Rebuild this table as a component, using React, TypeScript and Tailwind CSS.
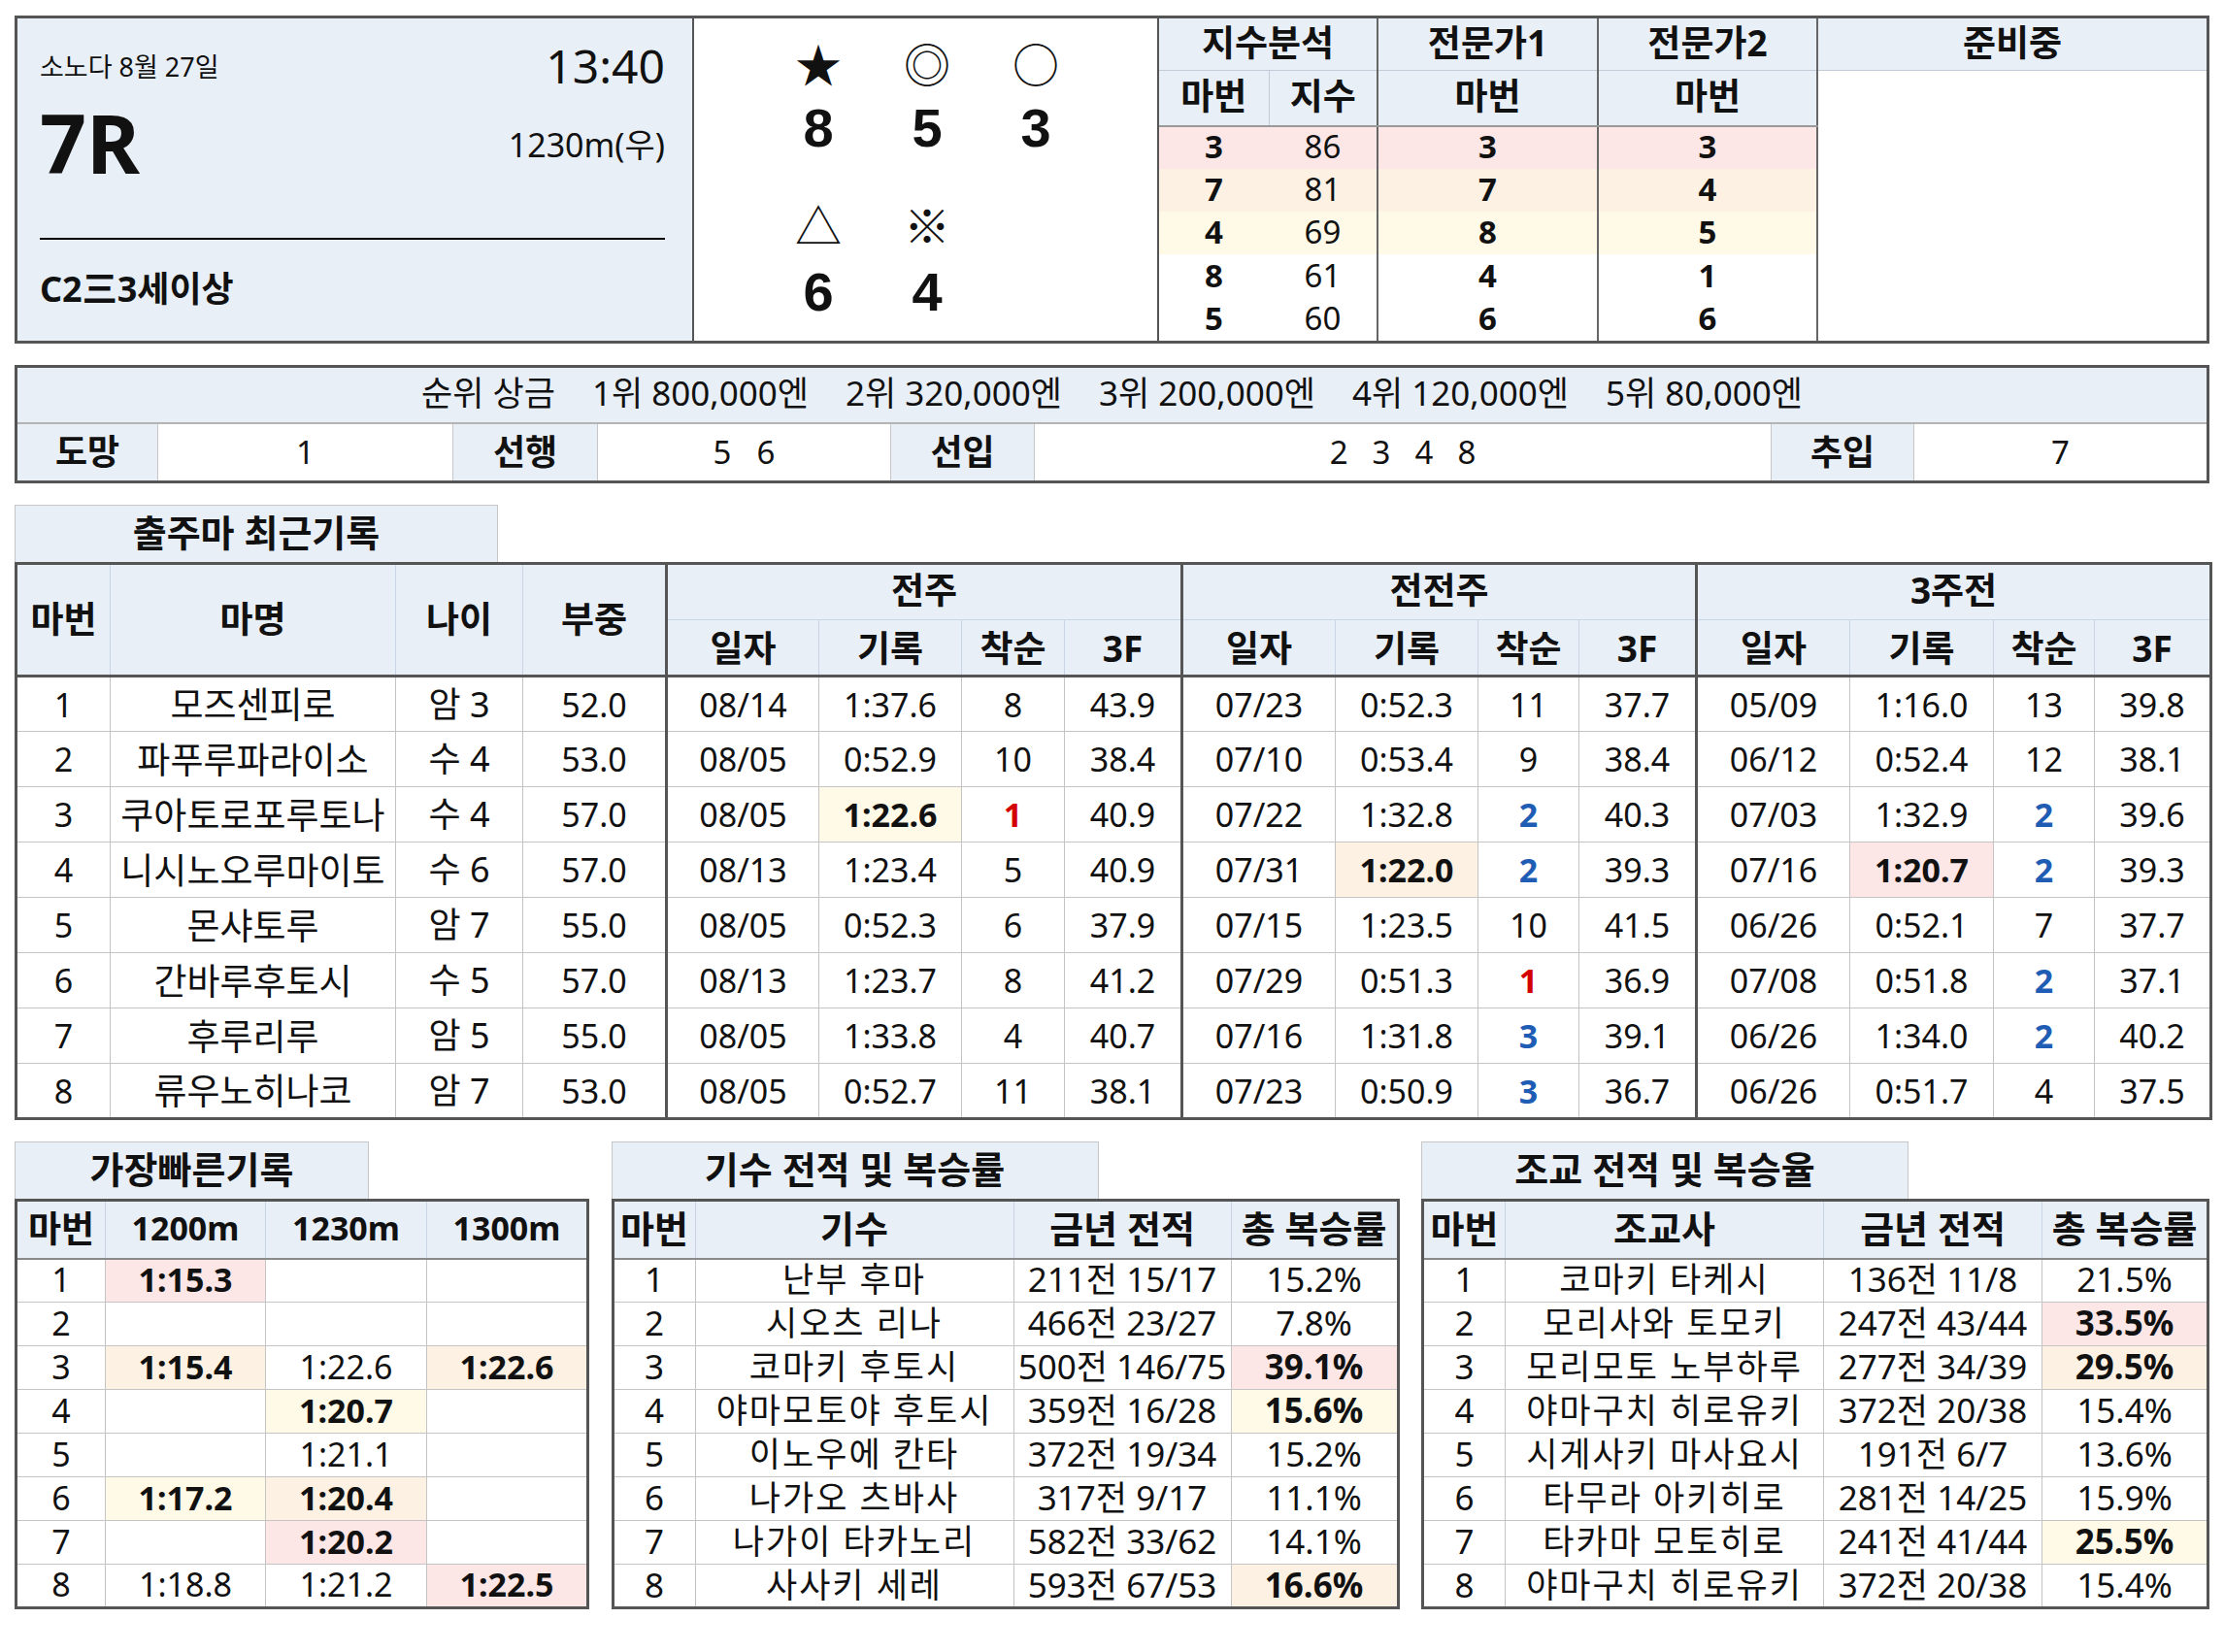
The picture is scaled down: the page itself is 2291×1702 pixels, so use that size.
import React from 'react';

const PINK = 'bg-[#fce6e6]';
const ORANGE = 'bg-[#fdf1e4]';
const YELLOW = 'bg-[#fefae7]';
const HEAD = 'bg-[#e9eff7]';

type Group = [string, string, string, string];
type Horse = { no: string; name: string; age: string; wt: string; g: Group[] };

const horses: Horse[] = [
  { no: '1', name: '모즈센피로', age: '암 3', wt: '52.0', g: [['08/14', '1:37.6', '8', '43.9'], ['07/23', '0:52.3', '11', '37.7'], ['05/09', '1:16.0', '13', '39.8']] },
  { no: '2', name: '파푸루파라이소', age: '수 4', wt: '53.0', g: [['08/05', '0:52.9', '10', '38.4'], ['07/10', '0:53.4', '9', '38.4'], ['06/12', '0:52.4', '12', '38.1']] },
  { no: '3', name: '쿠아토로포루토나', age: '수 4', wt: '57.0', g: [['08/05', '1:22.6', '1', '40.9'], ['07/22', '1:32.8', '2', '40.3'], ['07/03', '1:32.9', '2', '39.6']] },
  { no: '4', name: '니시노오루마이토', age: '수 6', wt: '57.0', g: [['08/13', '1:23.4', '5', '40.9'], ['07/31', '1:22.0', '2', '39.3'], ['07/16', '1:20.7', '2', '39.3']] },
  { no: '5', name: '몬샤토루', age: '암 7', wt: '55.0', g: [['08/05', '0:52.3', '6', '37.9'], ['07/15', '1:23.5', '10', '41.5'], ['06/26', '0:52.1', '7', '37.7']] },
  { no: '6', name: '간바루후토시', age: '수 5', wt: '57.0', g: [['08/13', '1:23.7', '8', '41.2'], ['07/29', '0:51.3', '1', '36.9'], ['07/08', '0:51.8', '2', '37.1']] },
  { no: '7', name: '후루리루', age: '암 5', wt: '55.0', g: [['08/05', '1:33.8', '4', '40.7'], ['07/16', '1:31.8', '3', '39.1'], ['06/26', '1:34.0', '2', '40.2']] },
  { no: '8', name: '류우노히나코', age: '암 7', wt: '53.0', g: [['08/05', '0:52.7', '11', '38.1'], ['07/23', '0:50.9', '3', '36.7'], ['06/26', '0:51.7', '4', '37.5']] },
];

// best record highlights in the recent-races table: row-group
const timeMarks: Record<string, string> = { '2-0': YELLOW, '3-1': ORANGE, '3-2': PINK };

type Mark = { v: string; bg?: string };
const fastest: Mark[][] = [
  [{ v: '1:15.3', bg: PINK }, { v: '' }, { v: '' }],
  [{ v: '' }, { v: '' }, { v: '' }],
  [{ v: '1:15.4', bg: ORANGE }, { v: '1:22.6' }, { v: '1:22.6', bg: ORANGE }],
  [{ v: '' }, { v: '1:20.7', bg: YELLOW }, { v: '' }],
  [{ v: '' }, { v: '1:21.1' }, { v: '' }],
  [{ v: '1:17.2', bg: YELLOW }, { v: '1:20.4', bg: ORANGE }, { v: '' }],
  [{ v: '' }, { v: '1:20.2', bg: PINK }, { v: '' }],
  [{ v: '1:18.8' }, { v: '1:21.2' }, { v: '1:22.5', bg: PINK }],
];

type Person = [string, string, string, string?];
const jockeys: Person[] = [
  ['난부 후마', '211전 15/17', '15.2%'],
  ['시오츠 리나', '466전 23/27', '7.8%'],
  ['코마키 후토시', '500전 146/75', '39.1%', PINK],
  ['야마모토야 후토시', '359전 16/28', '15.6%', YELLOW],
  ['이노우에 칸타', '372전 19/34', '15.2%'],
  ['나가오 츠바사', '317전 9/17', '11.1%'],
  ['나가이 타카노리', '582전 33/62', '14.1%'],
  ['사사키 세레', '593전 67/53', '16.6%', ORANGE],
];
const trainers: Person[] = [
  ['코마키 타케시', '136전 11/8', '21.5%'],
  ['모리사와 토모키', '247전 43/44', '33.5%', PINK],
  ['모리모토 노부하루', '277전 34/39', '29.5%', ORANGE],
  ['야마구치 히로유키', '372전 20/38', '15.4%'],
  ['시게사키 마사요시', '191전 6/7', '13.6%'],
  ['타무라 아키히로', '281전 14/25', '15.9%'],
  ['타카마 모토히로', '241전 41/44', '25.5%', YELLOW],
  ['야마구치 히로유키', '372전 20/38', '15.4%'],
];

const index = [
  ['3', '86', '3', '3', PINK],
  ['7', '81', '7', '4', ORANGE],
  ['4', '69', '8', '5', YELLOW],
  ['8', '61', '4', '1', ''],
  ['5', '60', '6', '6', ''],
];

function rankColor(r: string) {
  if (r === '1') return 'font-bold text-[#d40000]';
  if (r === '2' || r === '3') return 'font-bold text-[#1f5db5]';
  return '';
}

function Tab({ title, w }: { title: string; w: string }) {
  return (
    <div className={`${w} ${HEAD} flex h-[59px] items-center justify-center border border-b-0 border-[#c6c6c6] pb-[4px] text-[38px] font-bold`}>
      {title}
    </div>
  );
}

function PeopleTable({ title, who, rows, cols }: { title: string; who: string; rows: Person[]; cols: number[] }) {
  const th = `${HEAD} border border-[#c9d5e5] h-[60px] p-0 pb-[3px] text-[38px] font-bold leading-none border-b-2 border-b-[#8a8a8a]`;
  const td = 'border border-[#c4c4c4] h-[45px] p-0 pb-[3px] text-center text-[35px] leading-none whitespace-nowrap';
  return (
    <div>
      <Tab title={title} w="w-[502px]" />
      <table className="w-[809px] table-fixed border-collapse border-[3px] border-[#555]">
        <colgroup>
          {cols.map((c, i) => (
            <col key={i} style={{ width: c }} />
          ))}
        </colgroup>
        <thead>
          <tr>
            <th className={th}>마번</th>
            <th className={th}>{who}</th>
            <th className={th}>금년 전적</th>
            <th className={`${th} whitespace-nowrap`}>총 복승률</th>
          </tr>
        </thead>
        <tbody>
          {rows.map((r, i) => (
            <tr key={i}>
              <td className={td}>{i + 1}</td>
              <td className={`${td} text-[33px] tracking-[2px]`}>{r[0]}</td>
              <td className={td}>{r[1]}</td>
              <td className={`${td} ${r[3] ? `${r[3]} font-bold` : ''}`}>{r[2]}</td>
            </tr>
          ))}
        </tbody>
      </table>
    </div>
  );
}

export default function App() {
  const mainTh = `${HEAD} border border-[#c9d5e5] h-[58px] p-0 text-[37px] font-bold leading-none`;
  const mainTd = 'border border-[#c4c4c4] h-[57px] p-0 text-center text-[34px] leading-none whitespace-nowrap';
  const groupEdge = 'border-l-[3px] border-l-[#555]';
  const idxTd = 'h-[44px] p-0 pb-[3px] text-center text-[33px] leading-none';
  const idxTh = 'p-0 pb-[4px] text-[37px] font-bold leading-none';
  const bigNum = 'flex h-[50px] items-center justify-center text-[56px] font-bold leading-none';
  const smallCell = 'h-[45px] border border-[#c4c4c4] p-0 pb-[3px] text-center text-[34px] leading-none';

  return (
    <div
      className="min-h-[1702px] w-[2291px] bg-white px-[15px] pt-[16px] text-[#111]"
      style={{ fontFamily: '"Noto Sans", "Noto Sans CJK KR", sans-serif' }}
    >
      {/* race header */}
      <div className="flex h-[338px] border-[3px] border-[#555]">
        <div className={`${HEAD} flex w-[697px] flex-col border-r-2 border-[#555] pl-[23px] pr-[28px]`}>
          <div className="mt-[19px] flex h-[60px] items-center justify-between">
            <span className="pt-[2px] text-[27px]">소노다 8월 27일</span>
            <span className="text-[48px] leading-none">13:40</span>
          </div>
          <div className="mt-[4px] flex h-[90px] items-center justify-between">
            <span className="text-[84px] font-bold leading-none">7R</span>
            <span className="pt-[4px] text-[34px]">1230m(우)</span>
          </div>
          <div className="mt-[53px] border-t-2 border-black" />
          <div className="mt-[31px] flex h-[40px] items-center text-[36px] font-bold">C2三3세이상</div>
        </div>

        <div className="w-[479px] border-r-2 border-[#555] pl-[72px] pt-[20px]" style={{ fontFamily: '"Noto Sans CJK KR", sans-serif' }}>
          <div className="grid grid-cols-[112px_112px_112px] text-center">
            {['★', '◎', '○'].map((s) => (
              <div key={s} className="flex h-[50px] items-center justify-center text-[48px] leading-none">{s}</div>
            ))}
          </div>
          <div className="mt-[18px] grid grid-cols-[112px_112px_112px] text-center" style={{ fontFamily: '"Liberation Sans", sans-serif' }}>
            {['8', '5', '3'].map((s) => (
              <div key={s} className={bigNum}>{s}</div>
            ))}
          </div>
          <div className="mt-[48px] grid grid-cols-[112px_112px_112px] text-center">
            {['△', '※'].map((s) => (
              <div key={s} className="flex h-[50px] items-center justify-center text-[48px] leading-none">{s}</div>
            ))}
          </div>
          <div className="mt-[21px] grid grid-cols-[112px_112px_112px] text-center" style={{ fontFamily: '"Liberation Sans", sans-serif' }}>
            {['6', '4'].map((s) => (
              <div key={s} className={bigNum}>{s}</div>
            ))}
          </div>
        </div>

        <table className="h-full flex-1 table-fixed border-collapse">
          <colgroup>
            <col style={{ width: 113 }} />
            <col style={{ width: 112 }} />
            <col style={{ width: 227 }} />
            <col style={{ width: 226 }} />
            <col />
          </colgroup>
          <tbody>
            <tr>
              <th colSpan={2} className={`${HEAD} ${idxTh} h-[53px] border-r-2 border-b border-r-[#666] border-b-[#c2ccd8]`}>지수분석</th>
              <th className={`${HEAD} ${idxTh} border-r-2 border-b border-r-[#666] border-b-[#c2ccd8]`}>전문가1</th>
              <th className={`${HEAD} ${idxTh} border-r-2 border-b border-r-[#666] border-b-[#c2ccd8]`}>전문가2</th>
              <th className={`${HEAD} ${idxTh} border-b border-b-[#c2ccd8]`}>준비중</th>
            </tr>
            <tr>
              <th className={`${HEAD} ${idxTh} h-[57px] border-r border-b-2 border-r-[#c2ccd8] border-b-[#999]`}>마번</th>
              <th className={`${HEAD} ${idxTh} border-r-2 border-b-2 border-r-[#666] border-b-[#999]`}>지수</th>
              <th className={`${HEAD} ${idxTh} border-r-2 border-b-2 border-r-[#666] border-b-[#999]`}>마번</th>
              <th className={`${HEAD} ${idxTh} border-r-2 border-b-2 border-r-[#666] border-b-[#999]`}>마번</th>
              <td rowSpan={6} className="bg-white p-0" />
            </tr>
            {index.map((r, i) => (
              <tr key={i}>
                <td className={`${idxTd} ${r[4]} font-bold`}>{r[0]}</td>
                <td className={`${idxTd} ${r[4]} border-r-2 border-r-[#666]`}>{r[1]}</td>
                <td className={`${idxTd} ${r[4]} border-r-2 border-r-[#666] font-bold`}>{r[2]}</td>
                <td className={`${idxTd} ${r[4]} border-r-2 border-r-[#666] font-bold`}>{r[3]}</td>
              </tr>
            ))}
          </tbody>
        </table>
      </div>

      {/* prize & running style */}
      <div className="mt-[22px] border-[3px] border-[#555]">
        <div className={`${HEAD} flex h-[58px] items-center justify-center gap-[38px] border-b-2 border-[#b4b4b4] pb-[3px] text-[35px]`}>
          <span>순위 상금</span>
          <span>1위 800,000엔</span>
          <span>2위 320,000엔</span>
          <span>3위 200,000엔</span>
          <span>4위 120,000엔</span>
          <span>5위 80,000엔</span>
        </div>
        <div className="flex h-[58px] text-[33px]">
          <div className={`${HEAD} flex w-[145px] items-center justify-center border-r border-[#c6c6c6] text-[36px] font-bold`}>도망</div>
          <div className="flex w-[304px] items-center justify-center border-r border-[#c6c6c6]">1</div>
          <div className={`${HEAD} flex w-[149px] items-center justify-center border-r border-[#c6c6c6] text-[36px] font-bold`}>선행</div>
          <div className="flex w-[302px] items-center justify-center gap-[26px] border-r border-[#c6c6c6]">
            <span>5</span>
            <span>6</span>
          </div>
          <div className={`${HEAD} flex w-[148px] items-center justify-center border-r border-[#c6c6c6] text-[36px] font-bold`}>선입</div>
          <div className="flex w-[759px] items-center justify-center gap-[25px] border-r border-[#c6c6c6]">
            <span>2</span>
            <span>3</span>
            <span>4</span>
            <span>8</span>
          </div>
          <div className={`${HEAD} flex w-[147px] items-center justify-center border-r border-[#c6c6c6] text-[36px] font-bold`}>추입</div>
          <div className="flex flex-1 items-center justify-center">7</div>
        </div>
      </div>

      {/* recent records */}
      <div className="mt-[22px]">
        <Tab title="출주마 최근기록" w="w-[498px]" />
        <table className="w-[2261px] table-fixed border-collapse border-[3px] border-[#555]">
          <colgroup>
            {[97, 294, 131, 148, 157, 147, 106, 121, 158, 147, 104, 121, 158, 148, 104, 120].map((c, i) => (
              <col key={i} style={{ width: c }} />
            ))}
          </colgroup>
          <thead>
            <tr>
              <th rowSpan={2} className={`${mainTh} border-b-[3px] border-b-[#555] pb-[3px]`}>마번</th>
              <th rowSpan={2} className={`${mainTh} border-b-[3px] border-b-[#555] pb-[3px]`}>마명</th>
              <th rowSpan={2} className={`${mainTh} border-b-[3px] border-b-[#555] pb-[3px]`}>나이</th>
              <th rowSpan={2} className={`${mainTh} border-b-[3px] border-b-[#555] pb-[3px]`}>부중</th>
              {['전주', '전전주', '3주전'].map((g) => (
                <th key={g} colSpan={4} className={`${mainTh} ${groupEdge} pb-[6px]`}>{g}</th>
              ))}
            </tr>
            <tr>
              {[0, 1, 2].map((g) =>
                ['일자', '기록', '착순', '3F'].map((h, j) => (
                  <th key={`${g}-${h}`} className={`${mainTh} border-b-[3px] border-b-[#555] ${j === 0 ? groupEdge : ''}`}>{h}</th>
                ))
              )}
            </tr>
          </thead>
          <tbody>
            {horses.map((h, i) => (
              <tr key={h.no}>
                <td className={mainTd}>{h.no}</td>
                <td className={`${mainTd} text-[37px]`}>{h.name}</td>
                <td className={`${mainTd} text-[36px]`}>{h.age}</td>
                <td className={mainTd}>{h.wt}</td>
                {h.g.map((g, gi) => {
                  const mark = timeMarks[`${i}-${gi}`];
                  return (
                    <React.Fragment key={gi}>
                      <td className={`${mainTd} ${groupEdge}`}>{g[0]}</td>
                      <td className={`${mainTd} ${mark ? `${mark} font-bold` : ''}`}>{g[1]}</td>
                      <td className={`${mainTd} ${rankColor(g[2])}`}>{g[2]}</td>
                      <td className={mainTd}>{g[3]}</td>
                    </React.Fragment>
                  );
                })}
              </tr>
            ))}
          </tbody>
        </table>
      </div>

      {/* bottom tables */}
      <div className="mt-[22px] flex justify-between">
        <div>
          <Tab title="가장빠른기록" w="w-[365px]" />
          <table className="w-[589px] table-fixed border-collapse border-[3px] border-[#555]">
            <colgroup>
              {[92, 165, 166, 166].map((c, i) => (
                <col key={i} style={{ width: c }} />
              ))}
            </colgroup>
            <thead>
              <tr>
                {['마번', '1200m', '1230m', '1300m'].map((h, i) => (
                  <th key={h} className={`${HEAD} h-[60px] border border-[#c9d5e5] border-b-2 border-b-[#8a8a8a] p-0 pb-[3px] font-bold leading-none ${i === 0 ? 'text-[37px]' : 'text-[34px]'}`}>{h}</th>
                ))}
              </tr>
            </thead>
            <tbody>
              {fastest.map((r, i) => (
                <tr key={i}>
                  <td className={smallCell}>{i + 1}</td>
                  {r.map((c, j) => (
                    <td key={j} className={`${smallCell} ${c.bg ? `${c.bg} font-bold` : ''}`}>{c.v}</td>
                  ))}
                </tr>
              ))}
            </tbody>
          </table>
        </div>
        <PeopleTable title="기수 전적 및 복승률" who="기수" rows={jockeys} cols={[85, 328, 224, 172]} />
        <PeopleTable title="조교 전적 및 복승율" who="조교사" rows={trainers} cols={[85, 328, 225, 171]} />
      </div>
    </div>
  );
}
